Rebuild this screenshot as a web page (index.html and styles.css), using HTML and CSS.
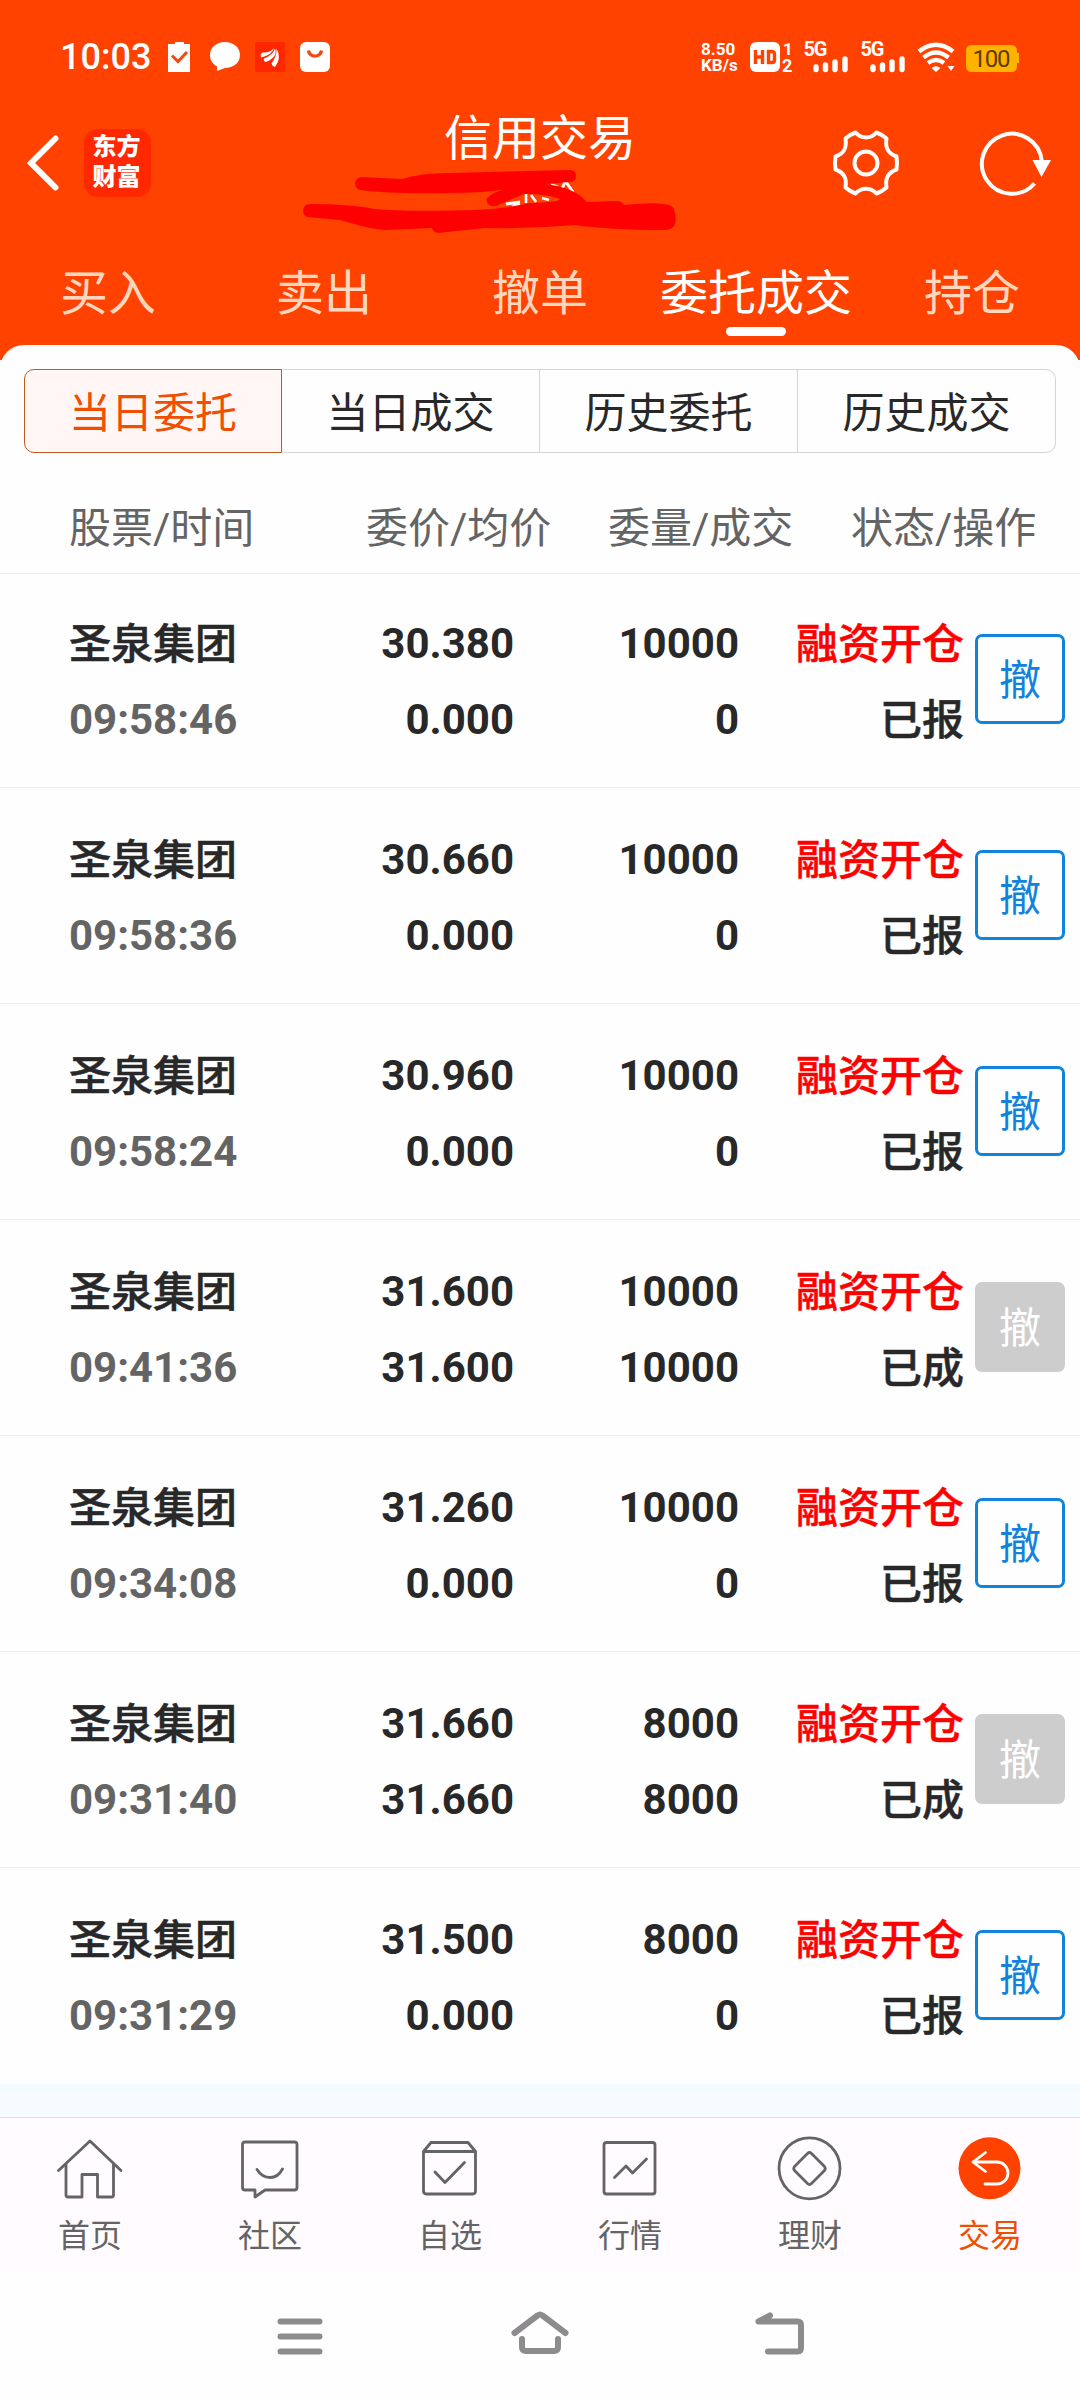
FILE: index.html
```html
<!DOCTYPE html>
<html lang="zh-CN">
<head>
    <meta charset="UTF-8">
    <meta name="viewport" content="width=device-width, initial-scale=1.0">
    <title>信用交易</title>
    <link rel="stylesheet" href="styles.css">
</head>
<body>
    <div class="header">
        <!-- Status bar -->
        <div class="status-bar">
            <span class="clock">10:03</span>
            <svg class="notice-icons" width="162" height="30" viewBox="0 0 162 30">
                <path d="M1 2H7V0H16V2H22V30H0V2Z" fill="#fff"/>
                <path d="M4 13.500L10 19.500L19 10" fill="none" stroke="#f04a10" stroke-width="3"/>
                <path d="M57 0C65.500 0 72 5.500 72 13C72 21 65 26 57 26L49 29V24.500C44.500 22 42 18 42 13C42 5.500 48.500 0 57 0Z" fill="#fff"/>
                <rect x="87" y="0" width="30" height="30" rx="2" fill="#ff2600"/>
                <path d="M93 15.500Q92 12 94.500 10.500Q102 11 106 6Q104 13 93 15.500Z" fill="#fff"/>
                <path d="M98 20Q95 19 96 16.500Q105 13 107 6.500Q110 15 98 20Z" fill="#fff"/>
                <path d="M107 25Q104 24 103.500 21.500Q109 14 108.500 6.500Q114 16 107 25Z" fill="#fff"/>
                <rect x="132" y="0" width="30" height="30" rx="6" fill="#fff"/>
                <path d="M140.500 8.500C141.500 16 152.500 16 153.500 8.500" fill="none" stroke="#f04a10" stroke-width="3.400"/>
            </svg>
            <div class="net-speed">
                <span>8.50</span>
                <span>KB/s</span>
            </div>
            <svg class="signal-icons" width="270" height="30" viewBox="0 0 270 30">
                <rect x="0" y="0" width="30" height="30" rx="6" fill="#fff"/>
                <path d="M5.500 8V22M12.500 8V22M5.500 15H12.500M18.500 9.500V20.500H22Q24.500 20.500 24.500 18V12Q24.500 9.500 22 9.500Z" fill="none" stroke="#ff4200" stroke-width="3.400"/>
                <text class="svg-text" x="33" y="12.500" font-size="17">1</text>
                <text class="svg-text" x="32" y="30" font-size="18">2</text>
                <text class="svg-text" x="53.500" y="14" font-size="20" textLength="24">5G</text>
                <path d="M66 25V27.500M75.500 23V27.500M85 20V27.500M95 17V27.500" stroke="#fff" stroke-width="5.400" stroke-linecap="round"/>
                <text class="svg-text" x="110.500" y="14" font-size="20" textLength="24">5G</text>
                <path d="M123 25V27.500M132.500 23V27.500M142 20V27.500M152 17V27.500" stroke="#fff" stroke-width="5.400" stroke-linecap="round"/>
                <path d="M169 9.500Q186 -4 203 9.500M173.500 15.500Q186 5.500 198.500 15.500M178 21Q186 15 194 21" fill="none" stroke="#fff" stroke-width="4.500"/>
                <path d="M181.500 26Q186 22.500 190.500 26L186 30ZM197.500 24H204.500L201 29Z" fill="#fff"/>
                <path d="M222 3H261Q267 3 267 9V11H269V21H267V24Q267 30 261 30H222Q216 30 216 24V9Q216 3 222 3Z" fill="#ffb300"/>
                <text class="battery-text" x="222.500" y="25" font-size="24" textLength="38">100</text>
            </svg>
        </div>

        <!-- Title bar -->
        <div class="title-bar">
            <svg class="back" width="32" height="56" viewBox="0 0 32 56">
                <path d="M28.500 3.500L4 28L28.500 52.500" fill="none" stroke="#fff" stroke-width="6" stroke-linecap="round"/>
            </svg>
            <div class="logo">东方<br>财富</div>
            <h1>信用交易</h1>
            <svg class="gear" width="70" height="70" viewBox="-35 -35 70 70">
                <path d="M-10.500 -30.500C-5 -24 5 -24 10.500 -30.500Q16 -28.500 20.500 -24.500C19 -15 22 -9.500 30.500 -6.500Q31.500 0 30.500 6.500C22 9.500 19 15 20.500 24.500Q16 28.500 10.500 30.500C5 24 -5 24 -10.500 30.500Q-16 28.500 -20.500 24.500C-19 15 -22 9.500 -30.500 6.500Q-31.500 0 -30.500 -6.500C-22 -9.500 -19 -15 -20.500 -24.500Q-16 -28.500 -10.500 -30.500Z" fill="none" stroke="#fff" stroke-width="4" stroke-linejoin="round"/>
                <circle r="11.500" fill="none" stroke="#fff" stroke-width="4"/>
            </svg>
            <svg class="refresh" width="76" height="70" viewBox="-35 -35 76 70">
                <path d="M22.500 20.500A30 30 0 1 1 29.800 -2" fill="none" stroke="#fff" stroke-width="4"/>
                <path d="M20.500 -3H39L29.500 14Z" fill="#fff"/>
            </svg>
            <!-- Red marker over the account name -->
            <svg class="marker" width="400" height="80" viewBox="0 0 400 80">
                <path d="M216 44L230 42M222 47L230 44M261 25L268 27M275 22L272 29M276 22L283 32" stroke="#fff" stroke-width="3" fill="none"/>
                <path d="M71 17Q90 18 112 19Q130 13 160 13L280 10Q286 10 286 16Q286 22 279 22L255 24Q284 27 297 42L326 41Q332 41 334 45Q384 40 384 50Q386 54 385.500 62Q384 70 374 70Q320 70 285 65Q240 69 195 68L148 73Q143 72 142 68L95 70Q80 69 50 60L18 57Q13 56 13 50Q14 44 20 44Q60 44 84 49Q120 52 185 50Q212 49 240 43Q270 42 270 39Q258 34 234 34L206 46Q197 47 196.500 40Q197 35 212 30Q190 33 160 33Q100 34 70 30Q65 28 65 23Q66 18 71 17Z" fill="#f00"/>
                <path d="M236 34V43M241 35L246 42M252 38L259 40" stroke="#fff" stroke-width="2.600" fill="none"/>
            </svg>
        </div>

        <!-- Main tabs -->
        <div class="tabs">
            <div class="tab">买入</div>
            <div class="tab">卖出</div>
            <div class="tab">撤单</div>
            <div class="tab active">委托成交</div>
            <div class="tab">持仓</div>
        </div>
    </div>

    <div class="content">
        <div class="segments">
            <div class="segment active">当日委托</div>
            <div class="segment">当日成交</div>
            <div class="segment">历史委托</div>
            <div class="segment">历史成交</div>
        </div>

        <div class="table-head">
            <span>股票/时间</span>
            <span>委价/均价</span>
            <span>委量/成交</span>
            <span>状态/操作</span>
        </div>

        <div class="order">
            <div class="name">圣泉集团</div>
            <div class="num">30.380</div>
            <div class="num">10000</div>
            <div class="type">融资开仓</div>
            <button class="btn-cancel">撤</button>
            <div class="num time">09:58:46</div>
            <div class="num">0.000</div>
            <div class="num">0</div>
            <div class="status">已报</div>
        </div>
        <div class="order">
            <div class="name">圣泉集团</div>
            <div class="num">30.660</div>
            <div class="num">10000</div>
            <div class="type">融资开仓</div>
            <button class="btn-cancel">撤</button>
            <div class="num time">09:58:36</div>
            <div class="num">0.000</div>
            <div class="num">0</div>
            <div class="status">已报</div>
        </div>
        <div class="order">
            <div class="name">圣泉集团</div>
            <div class="num">30.960</div>
            <div class="num">10000</div>
            <div class="type">融资开仓</div>
            <button class="btn-cancel">撤</button>
            <div class="num time">09:58:24</div>
            <div class="num">0.000</div>
            <div class="num">0</div>
            <div class="status">已报</div>
        </div>
        <div class="order">
            <div class="name">圣泉集团</div>
            <div class="num">31.600</div>
            <div class="num">10000</div>
            <div class="type">融资开仓</div>
            <button class="btn-cancel" disabled>撤</button>
            <div class="num time">09:41:36</div>
            <div class="num">31.600</div>
            <div class="num">10000</div>
            <div class="status">已成</div>
        </div>
        <div class="order">
            <div class="name">圣泉集团</div>
            <div class="num">31.260</div>
            <div class="num">10000</div>
            <div class="type">融资开仓</div>
            <button class="btn-cancel">撤</button>
            <div class="num time">09:34:08</div>
            <div class="num">0.000</div>
            <div class="num">0</div>
            <div class="status">已报</div>
        </div>
        <div class="order">
            <div class="name">圣泉集团</div>
            <div class="num">31.660</div>
            <div class="num">8000</div>
            <div class="type">融资开仓</div>
            <button class="btn-cancel" disabled>撤</button>
            <div class="num time">09:31:40</div>
            <div class="num">31.660</div>
            <div class="num">8000</div>
            <div class="status">已成</div>
        </div>
        <div class="order">
            <div class="name">圣泉集团</div>
            <div class="num">31.500</div>
            <div class="num">8000</div>
            <div class="type">融资开仓</div>
            <button class="btn-cancel">撤</button>
            <div class="num time">09:31:29</div>
            <div class="num">0.000</div>
            <div class="num">0</div>
            <div class="status">已报</div>
        </div>
    </div>

    <div class="list-end"></div>

    <!-- Bottom navigation -->
    <div class="bottom-nav">
        <div class="nav-item">
            <svg viewBox="0 0 72 72">
                <path d="M4.500 38.500L36 9L67 38.500M12 32V63Q12 65 14 65H28V42.500H43.500V65H57.500Q59.500 65 59.500 63V32"/>
            </svg>
            <span>首页</span>
        </div>
        <div class="nav-item">
            <svg viewBox="0 0 72 72">
                <path d="M11 10H60.500Q63 10 63 12.500V55.500Q63 58 60.500 58H31L21 65V58H11Q8.500 58 8.500 55.500V12.500Q8.500 10 11 10ZM23 37.500Q28 45.500 36 45.500Q44 45.500 48.500 37"/>
            </svg>
            <span>社区</span>
        </div>
        <div class="nav-item">
            <svg viewBox="0 0 72 72">
                <path d="M9.500 19.500L17 10.500H54L61.500 19.500V59Q61.500 62 58.500 62H12.500Q9.500 62 9.500 59ZM9.500 19.500H61.500M21 40L31 50.500L50.500 30.500"/>
            </svg>
            <span>自选</span>
        </div>
        <div class="nav-item">
            <svg viewBox="0 0 72 72">
                <rect x="10" y="10.500" width="51" height="51.500" rx="2.500"/>
                <path d="M20.500 45.500L32 34L38.500 41L52.500 27"/>
            </svg>
            <span>行情</span>
        </div>
        <div class="nav-item">
            <svg viewBox="0 0 72 72">
                <circle cx="35.500" cy="36.300" r="30.500"/>
                <path d="M33.500 21.500Q35.500 19.500 37.500 21.500L50.500 34.500Q52 36.500 50.500 38.500L37.500 51.500Q35.500 53.500 33.500 51.500L20.500 38.500Q19 36.500 20.500 34.500Z"/>
            </svg>
            <span>理财</span>
        </div>
        <div class="nav-item active">
            <svg viewBox="0 0 72 72">
                <circle class="disc" cx="35.500" cy="36.300" r="31"/>
                <path d="M31.500 20.500L19 30L31.500 39.500M19 30H43A11 11 0 0 1 43 52H31"/>
            </svg>
            <span>交易</span>
        </div>
    </div>

    <!-- Android keys -->
    <div class="system-nav">
        <svg viewBox="0 0 60 50"><path d="M10.500 12.500H49.500M10.500 27.500H49.500M10.500 42.500H49.500"/></svg>
        <svg viewBox="0 0 60 50"><path d="M4.500 24L27.500 6.500Q30 4.500 32.500 6.500L55.500 24M12 30V38Q12 42 16 42H44Q48 42 48 38V30"/></svg>
        <svg viewBox="0 0 60 50"><path d="M20 6.500L8.500 12.500H47.500Q51 12.500 51 16V38.500Q51 42.500 47.500 42.500H18"/></svg>
    </div>
</body>
</html>
```
FILE: styles.css
```css
:root {
    --primary-color: #ff4200;
    --text-color: #282828;
    --muted-color: #646464;
    --line-color: #ededed;
    --blue-color: #1283dc;
}

* {
    box-sizing: border-box;
    margin: 0;
    padding: 0;
    font-family: Roboto, "Noto Sans CJK SC", sans-serif;
}

body {
    width: 1080px;
    background-color: #fefefe;
    color: var(--text-color);
}

/* Header */
.header {
    height: 360px;
    background-color: var(--primary-color);
    color: white;
}

.status-bar {
    height: 114px;
    padding: 0 60px;
    display: flex;
    align-items: center;
}

.clock {
    width: 108px;
    font-size: 36px;
    font-weight: 500;
}

.net-speed {
    display: flex;
    flex-direction: column;
    width: 49px;
    margin-left: 371px;
    font-size: 17px;
    line-height: 16px;
    font-weight: 700;
}

.signal-icons {
    flex: none;
    overflow: visible;
}

.svg-text {
    fill: white;
    font-weight: 700;
}

.battery-text {
    fill: #5a3c00;
}

.title-bar {
    position: relative;
    display: flex;
    align-items: center;
    height: 98px;
    padding-left: 27px;
}

.logo {
    width: 67px;
    height: 68px;
    margin-left: 25px;
    padding: 3px 2px 0 0;
    border-radius: 14px;
    background-color: #ff2800;
    font-size: 24px;
    line-height: 30px;
    font-weight: 900;
    text-align: center;
}

.title-bar h1 {
    align-self: flex-start;
    width: 192px;
    margin-left: 293px;
    padding-top: 1px;
    font-size: 48px;
    line-height: 48px;
    font-weight: 400;
    white-space: nowrap;
}

.gear {
    margin-left: 195px;
}

.refresh {
    margin-left: 76px;
}

.marker {
    position: absolute;
    left: 290px;
    top: 46px;
}

/* Main tabs */
.tabs {
    display: flex;
}

.tab {
    flex: 1;
    padding-top: 58px;
    font-size: 48px;
    line-height: 48px;
    text-align: center;
    color: #ffd7bf;
}

.tab.active {
    color: white;
}

.tab.active::after {
    content: "";
    display: block;
    width: 60px;
    height: 9px;
    margin: 9px auto 0;
    border-radius: 5px;
    background-color: white;
}

/* White sheet */
.content {
    margin-top: -15px;
    padding-top: 24px;
    border-radius: 24px 24px 0 0;
    background-color: #fefefe;
}

.segments {
    display: flex;
    height: 84px;
    margin: 0 24px;
}

.segment {
    width: 258px;
    padding-top: 2px;
    border: 1px solid #d5d5da;
    border-left-width: 0;
    font-size: 42px;
    line-height: 84px;
    text-align: center;
}

.segment:last-child {
    border-radius: 0 10px 10px 0;
}

.segment.active {
    border: 1px solid #c25a1e;
    border-radius: 10px 0 0 10px;
    background-color: #fff6f5;
    color: #f04e00;
}

.table-head {
    display: grid;
    grid-template-columns: 297px 242px 243px 1fr;
    height: 97px;
    margin-top: 24px;
    padding: 3px 0 0 69px;
    border-bottom: 1px solid var(--line-color);
    font-size: 42px;
    line-height: 98px;
    color: var(--muted-color);
}

/* Order rows */
.order {
    display: grid;
    grid-template-columns: 200px 245px 225px 225px 101px;
    grid-template-rows: 76px 76px;
    height: 216px;
    padding: 35px 0 0 69px;
    border-bottom: 1px solid var(--line-color);
    font-size: 42px;
    line-height: 76px;
    font-weight: 500;
    text-align: right;
}

.table-head + .order {
    height: 214px;
    padding-top: 33px;
}

.order:last-child {
    border-bottom: none;
}

.order .name,
.order .time {
    text-align: left;
}

.order .name,
.order .type,
.order .status {
    -webkit-text-stroke: 0.5px currentColor;
}

.order .num {
    margin-top: -1px;
    font-weight: 700;
}

.order .time {
    color: var(--muted-color);
}

.order .type {
    color: #fd0000;
}

.btn-cancel {
    grid-column: 5;
    grid-row: 1 / 3;
    width: 90px;
    height: 90px;
    margin: 27px 0 0 11px;
    padding-top: 4px;
    border: 3px solid var(--blue-color);
    border-radius: 7px;
    background-color: transparent;
    color: var(--blue-color);
    font-size: 42px;
    line-height: 80px;
}

.btn-cancel:disabled {
    border-color: #cdcdcd;
    background-color: #cdcdcd;
    color: white;
}

.list-end {
    height: 33px;
    background-color: #f5fbff;
}

/* Bottom navigation */
.bottom-nav {
    display: flex;
    height: 156px;
    border-top: 1px solid #dedede;
    background-color: #fffbff;
}

.nav-item {
    flex: 1;
    display: flex;
    flex-direction: column;
    align-items: center;
    padding-top: 14px;
    font-size: 32px;
    line-height: 32px;
    color: var(--muted-color);
}

.nav-item svg {
    width: 72px;
    height: 72px;
    margin-bottom: 16px;
    fill: none;
    stroke: var(--muted-color);
    stroke-width: 2.8;
    stroke-linecap: round;
    stroke-linejoin: round;
}

.nav-item.active {
    color: #f04e00;
}

.nav-item.active svg {
    stroke: white;
}

.nav-item .disc {
    fill: var(--primary-color);
    stroke: none;
}

.system-nav {
    display: flex;
    justify-content: center;
    gap: 180px;
    height: 127px;
    padding-top: 36px;
}

.system-nav svg {
    width: 60px;
    height: 50px;
    fill: none;
    stroke: #8d8b8d;
    stroke-width: 6;
    stroke-linecap: round;
    stroke-linejoin: round;
}
```
